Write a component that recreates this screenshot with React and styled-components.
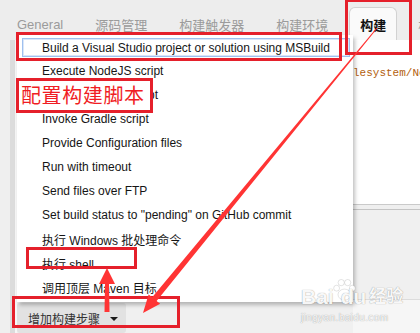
import React from 'react';
import styled, {createGlobalStyle} from 'styled-components';

const GlobalStyle = createGlobalStyle`
  html, body {
    margin: 0;
    padding: 0;
  }
  body {
    font-family: "Liberation Sans", "Noto Sans CJK SC", sans-serif;
    background: #f0f0f0;
  }
`;

const tabs = ['General', '源码管理', '构建触发器', '构建环境', '构建', '构建后'];

const steps = [
    'Build a Visual Studio project or solution using MSBuild',
    'Execute NodeJS script',
    'Execute Python script',
    'Invoke Gradle script',
    'Provide Configuration files',
    'Run with timeout',
    'Send files over FTP',
    'Set build status to "pending" on GitHub commit',
    '执行 Windows 批处理命令',
    '执行 shell',
    '调用顶层 Maven 目标',
];

const App = () => {
    return (
        <Page>
            <GlobalStyle/>
            <TabBar>
                {tabs.map((t) => (
                    <Tab key={t} $active={t === '构建'}>{t}</Tab>
                ))}
            </TabBar>
            <Body>
                <Gutter/>
                <MenuColumn>
                    <Menu>
                        {steps.map((s, i) => (
                            <MenuItem key={s} $active={i === 0}>{s}</MenuItem>
                        ))}
                    </Menu>
                    <AddButton>
                        增加构建步骤
                        <Caret/>
                    </AddButton>
                </MenuColumn>
                <RightSide>
                    <Panel>
                        <Code>lesystem/NodeJS</Code>
                    </Panel>
                    <PanelGap/>
                    <Footer/>
                </RightSide>
            </Body>

            <Watermark>
                <LogoRow>
                    <span>Bai</span>
                    <Paw viewBox="0 0 26 26">
                        <circle cx="5" cy="11" r="3.2"/>
                        <circle cx="10" cy="5" r="3.4"/>
                        <circle cx="17" cy="5" r="3.4"/>
                        <circle cx="22" cy="11" r="3.2"/>
                        <ellipse cx="13.5" cy="18" rx="7" ry="6"/>
                    </Paw>
                    <span>du</span>
                    <LogoCn>经验</LogoCn>
                </LogoRow>
                <LogoUrl>jingyan.baidu.com</LogoUrl>
            </Watermark>

            <RedBox $x={345} $y={-1} $w={67} $h={56}/>
            <RedBox $x={16} $y={32} $w={326} $h={29}/>
            <RedBox $x={16} $y={78} $w={137} $h={35} $label>配置构建脚本</RedBox>
            <RedBox $x={26} $y={247} $w={111} $h={22}/>
            <RedBox $x={12} $y={296} $w={168} $h={32}/>

            <Arrows viewBox="0 0 420 333">
                <polygon points="377.4,28.3 156.6,300.9 160.2,303.8 143,313 148.6,294.4 152.2,297.3 376.6,27.7"/>
                <polygon points="107,268 115,284 109,284 109.5,312 104.5,312 105,284 99,284"/>
            </Arrows>
        </Page>
    );
};

export default App;

const Page = styled.div`
  position: relative;
  width: 420px;
  height: 333px;
  overflow: hidden;
  background: #f0f0f0;
  display: flex;
  flex-direction: column;
`;

const TabBar = styled.div`
  height: 40px;
  flex: none;
  display: flex;
  align-items: flex-end;
  gap: 10px;
  padding-left: 6px;
  box-sizing: border-box;
  background: #ededed;
`;

const Tab = styled.div`
  height: 33px;
  padding: 0 10px;
  box-sizing: border-box;
  display: flex;
  align-items: center;
  font-size: 13px;
  white-space: nowrap;
  color: ${p => p.$active ? '#111' : '#9b9b9b'};
  font-weight: ${p => p.$active ? 'bold' : 'normal'};
  background: ${p => p.$active ? '#fafafa' : 'transparent'};
  border: 1px solid ${p => p.$active ? '#d2d2d2' : 'transparent'};
  border-bottom: none;
  border-radius: 6px 6px 0 0;
`;

const Body = styled.div`
  flex: 1;
  display: flex;
  min-height: 0;
`;

const Gutter = styled.div`
  width: 17px;
  flex: none;
  background: linear-gradient(to right, #efefef 0 10px, #dcdcdc 10px 15px, #f7f7f7 15px 17px);
`;

const MenuColumn = styled.div`
  width: 336px;
  flex: none;
  display: flex;
  flex-direction: column;
`;

const Menu = styled.div`
  position: relative;
  z-index: 1;
  margin-top: -5px;
  height: 267px;
  padding-bottom: 3px;
  box-sizing: border-box;
  background: #fff;
  box-shadow: 2px 3px 4px rgba(0, 0, 0, 0.25);
`;

const MenuItem = styled.div`
  height: ${p => p.$active ? '19px' : '24px'};
  margin: ${p => p.$active ? '3px 3px 2px 5px' : '0'};
  padding-left: ${p => p.$active ? '19px' : '25px'};
  box-sizing: border-box;
  display: flex;
  align-items: center;
  font-size: 12px;
  color: #151515;
  white-space: nowrap;
  border: ${p => p.$active ? '1px solid #9fc0ee' : 'none'};
  box-shadow: ${p => p.$active ? 'inset 0 0 0 1px #d9e6f9' : 'none'};
`;

const AddButton = styled.div`
  margin-top: 1px;
  align-self: flex-start;
  height: 30px;
  padding: 0 8px 0 11px;
  display: flex;
  align-items: center;
  gap: 10px;
  background: #e2e2e2;
  border-radius: 3px;
  font-size: 12px;
  color: #333;
`;

const Caret = styled.span`
  width: 0;
  height: 0;
  border-left: 4px solid transparent;
  border-right: 4px solid transparent;
  border-top: 4px solid #1a1a1a;
  margin-top: 2px;
`;

const RightSide = styled.div`
  flex: 1;
  display: flex;
  flex-direction: column;
`;

const Panel = styled.div`
  height: 165px;
  flex: none;
  background: #fff;
  border-bottom: 1px solid #cacaca;
  padding-top: 27px;
  box-sizing: border-box;
  overflow: hidden;
`;

const Code = styled.div`
  font-family: "Liberation Mono", monospace;
  font-size: 11px;
  line-height: 12px;
  color: #b3610e;
  white-space: nowrap;
`;

const PanelGap = styled.div`
  height: 4px;
  flex: none;
  background: #efefef;
  border-bottom: 1px solid #c4c4c4;
`;

const Footer = styled.div`
  flex: 1;
  background: linear-gradient(to bottom, #f0f0f0 0 89px, #dcdcdc 89px 90px, #f6f6f6 90px);
`;

const RedBox = styled.div`
  position: absolute;
  left: ${p => p.$x}px;
  top: ${p => p.$y}px;
  width: ${p => p.$w}px;
  height: ${p => p.$h}px;
  box-sizing: border-box;
  border: 3px solid #e5202b;
  z-index: 4;
  background: ${p => p.$label ? '#fff' : 'transparent'};
  display: flex;
  align-items: center;
  padding: 0 0 2px 2px;
  font-size: 20px;
  letter-spacing: 0.6px;
  color: #f01d24;
  white-space: nowrap;
`;

const Arrows = styled.svg`
  position: absolute;
  left: 0;
  top: 0;
  width: 420px;
  height: 333px;
  z-index: 5;
  pointer-events: none;
  fill: #ff3434;
`;

const Watermark = styled.div`
  position: absolute;
  left: 301px;
  top: 278px;
  z-index: 3;
  display: flex;
  flex-direction: column;
  color: rgba(255, 255, 255, 0.95);
  text-shadow: 0 0 1px rgba(0, 0, 0, 0.45);
`;

const LogoRow = styled.div`
  display: flex;
  align-items: flex-end;
  font-size: 21px;
  font-weight: bold;
  line-height: 24px;
`;

const Paw = styled.svg`
  width: 24px;
  height: 24px;
  margin: 0 -15px 7px -2px;
  fill: rgba(255, 255, 255, 0.9);
  stroke: rgba(0, 0, 0, 0.2);
  stroke-width: 0.6;
`;

const LogoCn = styled.span`
  font-size: 17px;
  margin-left: 3px;
`;

const LogoUrl = styled.div`
  font-size: 10px;
  line-height: 12px;
  margin-top: 3px;
  letter-spacing: 0.4px;
`;
